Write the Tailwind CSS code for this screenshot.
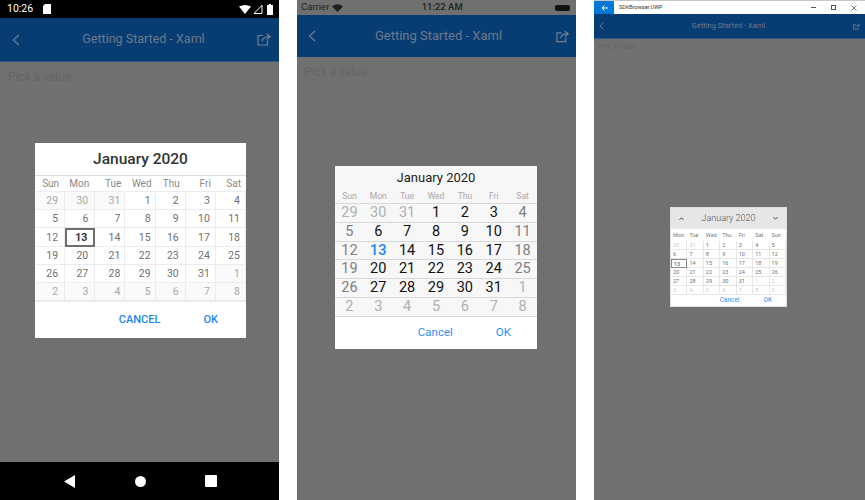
<!DOCTYPE html>
<html lang="en">

<head>
    <meta charset="UTF-8">
    <meta name="viewport" content="width=device-width, initial-scale=1.0">
    <script src="https://cdn.jsdelivr.net/npm/@tailwindcss/browser@4"></script>
    <title>Date Picker</title>
</head>

<body class="bg-white">
    <div class="flex w-[865px] h-[500px] overflow-hidden font-['Roboto',sans-serif]">

        <!-- android -->
        <div class="relative flex flex-col w-[279px] h-full bg-[#707070] shrink-0">
            <div class="flex items-center justify-between h-[18px] bg-black pl-[7px] pr-[6px] text-white">
                <div class="flex items-center gap-[10px]">
                    <span class="text-[10.5px] leading-none">10:26</span>
                    <svg width="8" height="10" viewBox="0 0 8 10" fill="#fff"><path d="M2 0h6v10H0V2z" /></svg>
                </div>
                <div class="flex items-center gap-[2px]">
                    <svg width="12" height="9" viewBox="0 0 12 9" fill="#fff"><path d="M0 1.5Q6-1.500 12 1.500L6 9z" /></svg>
                    <svg width="10" height="10" viewBox="0 0 10 10" fill="none" stroke="#fff"><path d="M9 1.200V9.500H1z" /></svg>
                    <svg width="6" height="11" viewBox="0 0 6 11" fill="#fff" class="ml-[2px]"><path d="M2 0h2v1h2v10H0V1h2z" /></svg>
                </div>
            </div>
            <div class="flex items-center justify-between h-[44px] bg-[#083d74] border-b border-[#2f5a88] pl-[12px] pr-[8px]">
                <svg width="8" height="12" viewBox="0 0 8 12" fill="none" stroke="#6f7f90" stroke-width="1.200"><path d="M7 1L1.500 6 7 11" /></svg>
                <span class="text-[12.500px] text-[#6c7989] ml-[10px]">Getting Started - Xaml</span>
                <svg width="14" height="13" viewBox="0 0 14 13" fill="none" stroke="#6f7f90" stroke-width="1.200"><path d="M6 2.500H1V12H10.500V7.500M5 8.500C5.500 5.500 8 3.500 13 3.500M9.500 .8L13.300 3.500 9.500 6.500" /></svg>
            </div>
            <div class="flex-1 px-[8px] pt-[8px] text-[12px] leading-[14px] text-[#646464]">Pick a value</div>
            <div class="flex items-center h-[38px] bg-black">
                <svg class="ml-[64px]" width="11" height="13" viewBox="0 0 11 13" fill="#fff"><path d="M11 0V13L0 6.500z" /></svg>
                <div class="w-[11px] h-[11px] rounded-full bg-white ml-[60px]"></div>
                <div class="w-[12px] h-[12px] rounded-[1px] bg-white ml-[59px]"></div>
            </div>

            <!-- dialog -->
            <div class="absolute inset-0 flex justify-center pt-[143px]">
                <div class="w-[211px] h-[195px] bg-white ml-[2px] flex flex-col">
                    <div class="h-[33px] flex items-center justify-center pt-[1px] text-[15.500px] font-medium text-[#333333] border-b border-[#dddddd]">January 2020</div>
                    <div id="androidHead" class="grid grid-cols-7 h-[15px] items-center text-[10px] text-[#888888]"></div>
                    <div id="androidGrid" class="grid grid-cols-7 border-t border-[#ececec] border-b"></div>
                    <div class="flex-1 flex items-center justify-end pr-[28px] pt-[1px] gap-[43px] text-[11px] font-medium text-[#1a86f0]">
                        <span>CANCEL</span><span>OK</span>
                    </div>
                </div>
            </div>
        </div>

        <!-- ios -->
        <div class="relative flex flex-col w-[279px] h-full bg-[#707070] shrink-0 ml-[18px]">
            <div class="flex items-center justify-between h-[15px] px-[4px] text-[9.500px] text-[#1f1f1f]">
                <div class="flex items-center gap-[3px]">
                    <span>Carrier</span>
                    <svg width="11" height="8" viewBox="0 0 11 8" fill="#1f1f1f"><path d="M0 2.500Q5.500-2 11 2.500L5.500 8z" /></svg>
                </div>
                <span class="font-medium ml-[-14px]">11:22 AM</span>
                <div class="w-[15px] h-[6px] bg-[#111111] rounded-[2px] mr-[2px]"></div>
            </div>
            <div class="flex items-center justify-between h-[42px] bg-[#083d74] pl-[11px] pr-[7px]">
                <svg width="8" height="12" viewBox="0 0 8 12" fill="none" stroke="#6f7f90" stroke-width="1.200"><path d="M7 1L1.500 6 7 11" /></svg>
                <span class="text-[13px] text-[#6c7989] ml-[5px]">Getting Started - Xaml</span>
                <svg width="13" height="13" viewBox="0 0 14 13" fill="none" stroke="#6f7f90" stroke-width="1.300"><path d="M6 2.500H1V12H10.500V7.500M5 8.500C5.500 5.500 8 3.500 13 3.500M9.500 .8L13.300 3.500 9.500 6.500" /></svg>
            </div>
            <div class="flex-1 px-[7px] pt-[8px] text-[12px] leading-[14px] text-[#646464]">Pick a value</div>

            <!-- dialog -->
            <div class="absolute inset-0 flex justify-center pt-[166px]">
                <div class="w-[202px] h-[183px] bg-white ml-[-1px] flex flex-col">
                    <div class="bg-[#f7f7f7]">
                        <div class="h-[23px] flex items-center justify-center text-[13px] text-[#222222]">January 2020</div>
                        <div id="iosHead" class="grid grid-cols-7 h-[14px] items-center text-center text-[8.500px] text-[#a8a8a8]"></div>
                    </div>
                    <div id="iosGrid" class="grid grid-cols-7 border-t border-[#d8d8d8] text-center text-[14.500px]"></div>
                    <div class="flex-1 flex items-center justify-end pr-[26px] gap-[43px] text-[11.500px] text-[#2f8ff0]">
                        <span>Cancel</span><span>OK</span>
                    </div>
                </div>
            </div>
        </div>

        <!-- uwp -->
        <div class="relative flex flex-col w-[271px] h-full bg-[#707070] shrink-0 ml-[18px]">
            <div class="flex items-center h-[14px] bg-white border-t border-[#c8c8c8] text-[#333333]">
                <div class="flex items-center justify-center w-[20px] h-full bg-[#0078d7]">
                    <svg width="7" height="6" viewBox="0 0 7 6" fill="none" stroke="#fff"><path d="M7 3H1M3.500 .5L1 3l2.500 2.500" /></svg>
                </div>
                <span class="text-[5.500px] ml-[5px] flex-1">SDKBrowser.UWP</span>
                <div class="w-[5px] h-px bg-[#555555] mr-[15px]"></div>
                <div class="w-[5px] h-[5px] border border-[#555555] mr-[15px]"></div>
                <svg class="mr-[8px]" width="6" height="6" viewBox="0 0 6 6" stroke="#555555" stroke-width="0.800"><path d="M.5 .5L5.500 5.500M5.500 .5L.5 5.500" /></svg>
            </div>
            <div class="flex items-center justify-between h-[25px] bg-[#083d74] border-b border-[#2f5a88] pl-[5px] pr-[5px]">
                <svg width="5" height="8" viewBox="0 0 8 12" fill="none" stroke="#6f7f90" stroke-width="1.500"><path d="M7 1L1.500 6 7 11" /></svg>
                <span class="text-[7.500px] text-[#6c7989]">Getting Started - Xaml</span>
                <svg width="7" height="7" viewBox="0 0 14 13" fill="none" stroke="#6f7f90" stroke-width="1.500"><path d="M6 2.500H1V12H10.500V7.500M5 8.500C5.500 5.500 8 3.500 13 3.500M9.500 .8L13.300 3.500 9.500 6.500" /></svg>
            </div>
            <div class="flex-1 px-[4px] pt-[3px] text-[7px] leading-[10px] text-[#646464]">Pick a value</div>

            <!-- dialog -->
            <div class="absolute inset-0 flex justify-center pt-[207px]">
                <div class="w-[117px] h-[100px] bg-white mr-[2px] flex flex-col border border-[#e0e0e0]">
                    <div class="h-[21px] bg-[#e6e6e6] flex items-center justify-between px-[8px] text-[#555555]">
                        <svg width="5" height="3" viewBox="0 0 5 3" fill="none" stroke="#444444"><path d="M.5 2.800L2.500 .8 4.500 2.800" /></svg>
                        <span class="text-[9px] font-light">January 2020</span>
                        <svg width="5" height="3" viewBox="0 0 5 3" fill="none" stroke="#444444"><path d="M.5 .2L2.500 2.200 4.500 .2" /></svg>
                    </div>
                    <div id="uwpHead" class="grid grid-cols-7 h-[12px] items-center text-[5.500px] text-[#777777]"></div>
                    <div id="uwpGrid" class="grid grid-cols-7 text-[5.500px]"></div>
                    <div class="flex-1 flex items-center justify-end pr-[14px] gap-[24px] text-[6.500px] text-[#2f8ff0]">
                        <span>Cancel</span><span>OK</span>
                    </div>
                </div>
            </div>
        </div>
    </div>

    <script>
        const sunFirst = ['Sun', 'Mon', 'Tue', 'Wed', 'Thu', 'Fri', 'Sat'];
        const monFirst = ['Mon', 'Tue', 'Wed', 'Thu', 'Fri', 'Sat', 'Sun'];

        // january 2020 as it falls in a sunday-first or monday-first month
        function days(first) {
            const out = [];
            for (let i = 0; i < 42; i++) {
                const d = new Date(2020, 0, first + i);
                out.push({ n: d.getDate(), inMonth: d.getMonth() === 0 && d.getFullYear() === 2020, col: i % 7 });
            }
            return out;
        }

        // android
        const pads = ['pr-[6px]', 'pr-[6px]', 'pr-[4px]', 'pr-[4px]', 'pr-[6px]', 'pr-[5px]', 'pr-[5px]'];
        document.getElementById('androidHead').innerHTML = sunFirst
            .map((w, i) => `<div class="text-right ${pads[i]}">${w}</div>`).join('');
        document.getElementById('androidGrid').innerHTML = days(-2).map(d => {
            const today = d.inMonth && d.n === 13;
            const look = today
                ? 'border-2 border-[#6e6e6e] font-bold text-[#333333]'
                : 'border-r border-b border-[#ececec] ' + (d.inMonth ? 'text-[#707070]' : 'bg-[#fafafa] text-[#a9a9a9]');
            return `<div class="h-[18.200px] pt-[1px] flex items-center justify-end text-[10.500px] ${pads[d.col]} ${look}">${d.n}</div>`;
        }).join('');

        // ios
        document.getElementById('iosHead').innerHTML = sunFirst.map(w => `<div>${w}</div>`).join('');
        document.getElementById('iosGrid').innerHTML = days(-2).map(d => {
            const weekend = d.col === 0 || d.col === 6;
            let color = 'text-[#111111]';
            if (!d.inMonth) color = 'text-[#b0b0b0]';
            else if (d.n === 13) color = 'text-[#1a86f0] font-medium';
            else if (weekend) color = 'text-[#808080]';
            return `<div class="h-[18.800px] flex items-center justify-center bg-[#f7f7f7] border-b border-[#d8d8d8] ${color}">${d.n}</div>`;
        }).join('');

        // uwp
        document.getElementById('uwpHead').innerHTML = monFirst.map(w => `<div class="pl-[2px]">${w}</div>`).join('');
        document.getElementById('uwpGrid').innerHTML = days(-1).map(d => {
            const today = d.inMonth && d.n === 13;
            const look = today
                ? 'border border-[#888888] text-[#444444]'
                : 'border-r border-b border-[#e6e6e6] ' + (d.inMonth ? 'text-[#707070]' : 'text-[#cccccc]');
            return `<div class="h-[9px] leading-[8px] pl-[2px] ${look}">${d.n}</div>`;
        }).join('');
    </script>
</body>

</html>
